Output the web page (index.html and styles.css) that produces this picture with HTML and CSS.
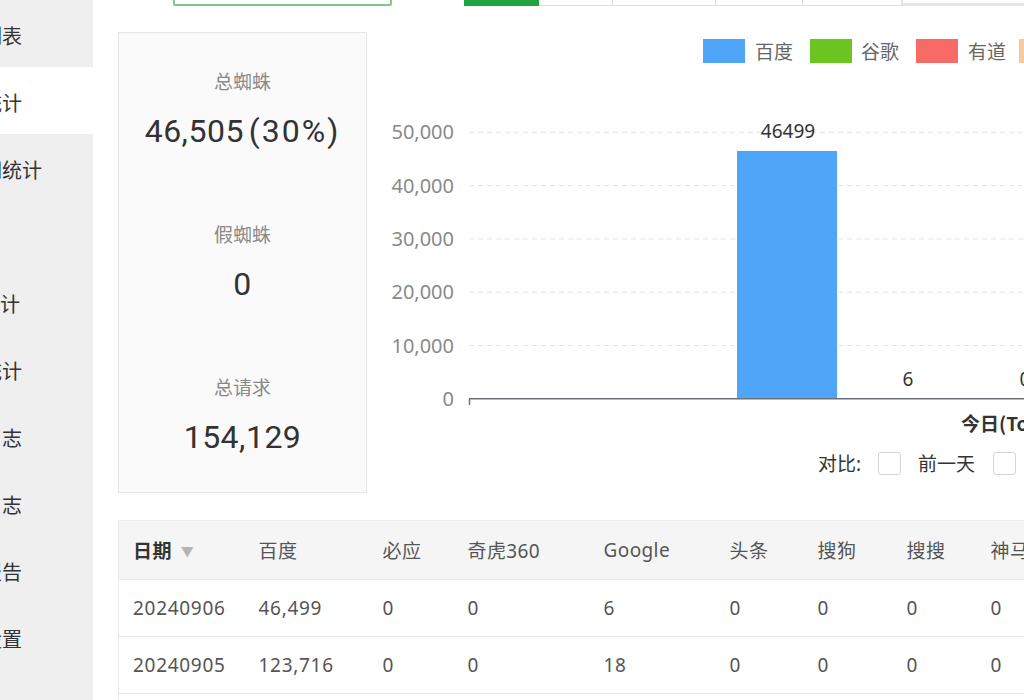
FILE: index.html
```html
<!DOCTYPE html>
<html lang="zh-CN">
<head>
<meta charset="utf-8">
<title>蜘蛛统计</title>
<link rel="stylesheet" href="styles.css">
</head>
<body>
<div class="app">
  <aside class="sidebar">
    <nav class="nav">
      <div class="nav-item">蜘蛛列表</div>
      <div class="nav-item active">蜘蛛统计</div>
      <div class="nav-item">关键词统计</div>
      <div class="nav-item">日志</div>
      <div class="nav-item">URL统计</div>
      <div class="nav-item">页面统计</div>
      <div class="nav-item">访问日志</div>
      <div class="nav-item">错误日志</div>
      <div class="nav-item">蜘蛛报告</div>
      <div class="nav-item">系统设置</div>
    </nav>
  </aside>

  <main class="main">
    <div class="toolbar">
      <div class="search"></div>
      <div class="segments">
        <div class="seg on seg-1"></div>
        <div class="seg seg-2"></div>
        <div class="seg seg-3"></div>
        <div class="seg seg-4"></div>
        <div class="seg seg-5"></div>
        <div class="range"></div>
      </div>
    </div>

    <section class="overview">
      <div class="stats">
        <div class="stat">
          <div class="stat-label">总蜘蛛</div>
          <div class="stat-value">46,505<span class="paren">(30%)</span></div>
        </div>
        <div class="stat">
          <div class="stat-label">假蜘蛛</div>
          <div class="stat-value">0</div>
        </div>
        <div class="stat">
          <div class="stat-label">总请求</div>
          <div class="stat-value">154,129</div>
        </div>
      </div>

      <div class="chart">
        <svg class="chart-svg" width="700" height="410" viewBox="0 0 700 410">
          <g class="legend">
            <rect x="336" y="7" width="42" height="24" fill="#4fa6f8"/>
            <text x="388" y="27">百度</text>
            <rect x="443" y="7" width="42" height="24" fill="#6cc521"/>
            <text x="494" y="27">谷歌</text>
            <rect x="549" y="7" width="42" height="24" fill="#f76a66"/>
            <text x="601" y="27">有道</text>
            <rect x="652" y="7" width="42" height="24" fill="#f7c9a0"/>
          </g>
          <g class="grid-lines">
            <line x1="102" y1="100.3" x2="700" y2="100.3"/>
            <line x1="102" y1="153.6" x2="700" y2="153.6"/>
            <line x1="102" y1="206.9" x2="700" y2="206.9"/>
            <line x1="102" y1="260.2" x2="700" y2="260.2"/>
            <line x1="102" y1="313.5" x2="700" y2="313.5"/>
          </g>
          <g class="y-labels">
            <text x="87" y="107.3">50,000</text>
            <text x="87" y="160.6">40,000</text>
            <text x="87" y="213.9">30,000</text>
            <text x="87" y="267.2">20,000</text>
            <text x="87" y="320.5">10,000</text>
            <text x="87" y="373.8">0</text>
          </g>
          <rect class="bar" x="370" y="119" width="100" height="247.8"/>
          <line class="axis" x1="102" y1="366.8" x2="700" y2="366.8"/>
          <line class="axis" x1="102.5" y1="366.8" x2="102.5" y2="373"/>
          <g class="bar-labels">
            <text x="421" y="106">46499</text>
            <text x="541" y="354">6</text>
            <text x="658" y="354">0</text>
          </g>
          <text class="x-label" x="594" y="399">今日(Today)</text>
        </svg>
        <div class="compare">
          <span>对比:</span>
          <span class="check"></span>
          <span class="check-text">前一天</span>
          <span class="check"></span>
        </div>
      </div>
    </section>

    <table class="grid">
      <colgroup>
        <col class="c1"><col class="c2"><col class="c3"><col class="c4"><col class="c5">
        <col class="c6"><col class="c7"><col class="c8"><col class="c9"><col class="c10">
      </colgroup>
      <thead>
        <tr>
          <th class="sortable">日期<span class="caret">▼</span></th>
          <th>百度</th>
          <th>必应</th>
          <th>奇虎360</th>
          <th>Google</th>
          <th>头条</th>
          <th>搜狗</th>
          <th>搜搜</th>
          <th>神马</th>
          <th>有道</th>
        </tr>
      </thead>
      <tbody>
        <tr><td>20240906</td><td>46,499</td><td>0</td><td>0</td><td>6</td><td>0</td><td>0</td><td>0</td><td>0</td><td>0</td></tr>
        <tr><td>20240905</td><td>123,716</td><td>0</td><td>0</td><td>18</td><td>0</td><td>0</td><td>0</td><td>0</td><td>0</td></tr>
        <tr><td>20240904</td><td>98,210</td><td>0</td><td>0</td><td>12</td><td>0</td><td>0</td><td>0</td><td>0</td><td>0</td></tr>
      </tbody>
    </table>
  </main>
</div>
</body>
</html>
```

FILE: styles.css
```css
* { box-sizing: border-box; }

html, body {
  margin: 0;
  padding: 0;
}

body {
  width: 1024px;
  height: 700px;
  overflow: hidden;
  background: #fff;
  color: #333;
  font-family: "Noto Sans", "Noto Sans CJK SC", sans-serif;
}

.app {
  display: flex;
  height: 700px;
}

/* ---------- sidebar ---------- */
.sidebar {
  flex: none;
  width: 93px;
  background: #efefef;
  overflow: hidden;
}

.nav {
  margin-left: -58px;
  width: 151px;
}

.nav-item {
  height: 67px;
  display: flex;
  align-items: center;
  padding-top: 3px;
  font-family: "Noto Sans CJK SC", sans-serif;
  font-size: 20px;
  color: #333;
  white-space: nowrap;
}

.nav-item.active {
  background: #fff;
}

/* ---------- main ---------- */
.main {
  flex: 1;
  min-width: 0;
  overflow: hidden;
  padding-left: 25px;
}

.toolbar {
  display: flex;
  align-items: flex-end;
  height: 40px;
  margin-top: -34px;
}

.search {
  flex: none;
  width: 219px;
  height: 40px;
  margin-left: 55px;
  border: 2px solid #84c689;
  border-radius: 2px;
}

.segments {
  flex: none;
  display: flex;
  height: 40px;
  margin-left: 72px;
}

.seg {
  height: 40px;
  border: 1px solid #dedede;
  border-left: none;
}

.seg.on {
  background: #1ea33f;
  border-color: #1ea33f;
}

.seg-1 { width: 75px; }
.seg-2 { width: 74px; }
.seg-3 { width: 103px; }
.seg-4 { width: 87px; }
.seg-5 { width: 99px; }

.range {
  width: 220px;
  height: 40px;
  border-bottom: 3px solid #e6e6e6;
  border-left: 1px solid #e6e6e6;
  margin-bottom: 1px;
}

/* ---------- overview ---------- */
.overview {
  display: flex;
  margin-top: 26px;
}

.stats {
  flex: none;
  width: 249px;
  height: 461px;
  padding-top: 36px;
  background: #fafafa;
  border: 1px solid #e6e6e6;
  text-align: center;
}

.stat + .stat {
  margin-top: 69px;
}

.stat-label {
  font-size: 19px;
  line-height: 26px;
  color: #888;
}

.stat-value {
  margin-top: 14px;
  font-family: Roboto, "Noto Sans", sans-serif;
  font-size: 32px;
  line-height: 44px;
  color: #333;
  letter-spacing: 0.5px;
}

.paren {
  margin-left: 5px;
  letter-spacing: 2px;
}

.chart {
  flex: none;
  width: 700px;
}

.chart-svg {
  display: block;
}

.legend text {
  font-family: "Noto Sans CJK SC", sans-serif;
  font-size: 19px;
  fill: #666;
}

.grid-lines line {
  stroke: #e3e3e3;
  stroke-width: 1;
  stroke-dasharray: 5 4;
}

.y-labels text {
  font-family: "Noto Sans", sans-serif;
  font-size: 20px;
  fill: #8a8a8a;
  text-anchor: end;
}

.bar {
  fill: #4fa6f8;
}

.axis {
  stroke: #6e7079;
  stroke-width: 1.5;
}

.bar-labels text {
  font-family: "Noto Sans", sans-serif;
  font-size: 19px;
  fill: #333;
  text-anchor: middle;
}

.x-label {
  font-family: "Noto Sans CJK SC", sans-serif;
  font-size: 19px;
  font-weight: bold;
  fill: #333;
}

.compare {
  display: flex;
  align-items: center;
  height: 42px;
  padding-left: 451px;
  font-size: 19px;
  color: #333;
  white-space: nowrap;
}

.check {
  flex: none;
  width: 23px;
  height: 23px;
  margin-left: 17px;
  border: 1px solid #d4d4d4;
  border-radius: 3px;
  background: #fff;
}

.check-text {
  margin-left: 17px;
}

.check-text + .check {
  margin-left: 18px;
}

/* ---------- table ---------- */
.grid {
  margin-top: 27px;
  width: 1150px;
  table-layout: fixed;
  border-collapse: collapse;
  border: 1px solid #ebebeb;
  font-size: 19px;
}

.c1 { width: 126px; }
.c2 { width: 124px; }
.c3 { width: 85px; }
.c4 { width: 136px; }
.c5 { width: 126px; }
.c6 { width: 88px; }
.c7 { width: 89px; }
.c8 { width: 84px; }
.c9 { width: 110px; }
.c10 { width: 182px; }

.grid th {
  height: 59px;
  padding: 0 0 0 14px;
  background: #f5f5f5;
  text-align: left;
  font-weight: normal;
  color: #555;
  white-space: nowrap;
  letter-spacing: 0.4px;
}

.grid th.sortable {
  font-weight: bold;
  color: #333;
}

.caret {
  margin-left: 9px;
  font-size: 13px;
  color: #b5b5b5;
  font-weight: normal;
  vertical-align: 2px;
}

.grid td {
  height: 57px;
  padding: 0 0 0 14px;
  border-top: 1px solid #e8e8e8;
  color: #555;
  letter-spacing: 0.7px;
  white-space: nowrap;
}
```
